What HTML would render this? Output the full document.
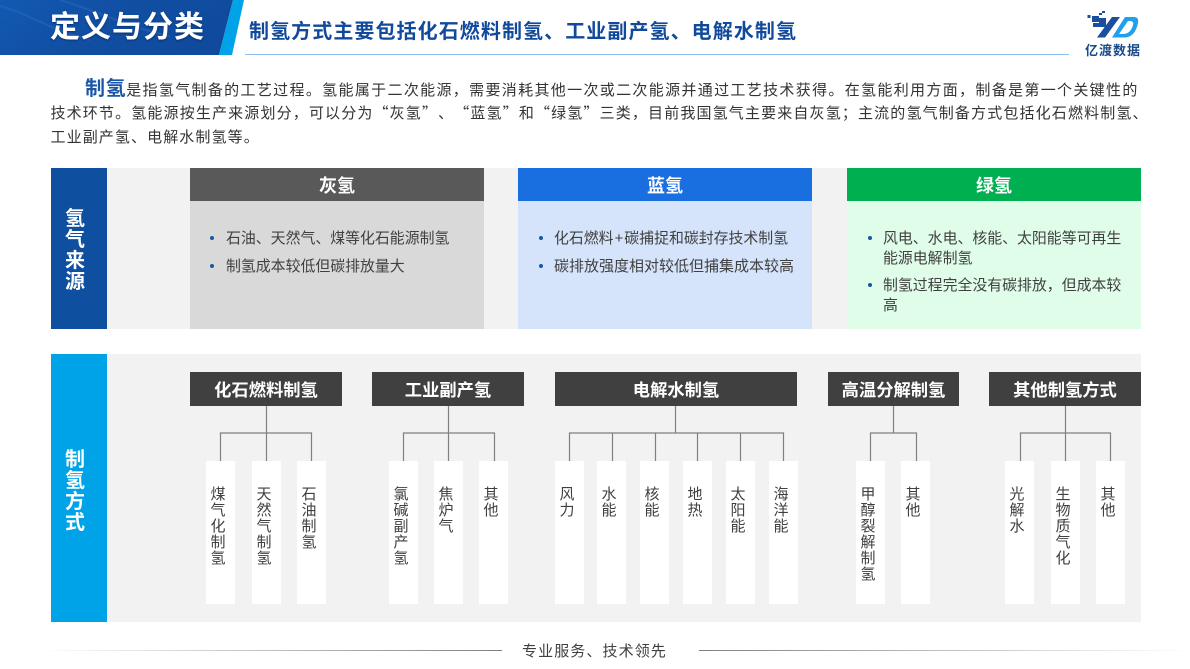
<!DOCTYPE html>
<html lang="zh">
<head>
<meta charset="utf-8">
<title>定义与分类</title>
<style>
html,body{margin:0;padding:0;background:#fff}
body{width:1190px;height:669px;position:relative;overflow:hidden;font-family:"Liberation Sans","Noto Sans CJK SC",sans-serif;color:#404040;text-spacing-trim:space-all}
.a{position:absolute}
.t{position:absolute;white-space:nowrap}
.line{position:absolute;white-space:nowrap;font-family:"Noto Sans CJK SC","Liberation Sans",sans-serif;font-size:15px;letter-spacing:1.1px;line-height:24px;color:#333;left:50.5px;text-spacing-trim:space-all}
.hd{position:absolute;color:#fff;font-weight:700;text-align:center}
.h1{top:168px;height:33px;line-height:36px;font-size:18px;width:294px}
.bd{position:absolute;top:201px;height:128px;width:294px}
.bl{position:absolute;font-size:14.9px;line-height:20px;color:#404040;white-space:nowrap}
.dot{position:absolute;width:4px;height:4px;border-radius:50%;background:#1a56a8}
.h2{top:372px;height:34px;line-height:36px;font-size:17.3px;background:#404040}
.c{position:absolute;top:461px;width:24.5px;padding-left:4.5px;padding-top:26px;box-sizing:content-box;height:117px;background:#fff;font-size:15px;line-height:16px;color:#404040}
.side{position:absolute;left:51px;width:56px;color:#fff;font-weight:700;font-size:20px;line-height:21px}
.side span{position:absolute;left:14px;width:20px;display:block}
</style>
</head>
<body>
<svg class="a" style="left:0;top:0" width="1190" height="62" viewBox="0 0 1190 62">
<defs>
<linearGradient id="g" x1="0" y1="0" x2="1" y2="0.3"><stop offset="0" stop-color="#1259b3"/><stop offset="0.5" stop-color="#114fa3"/><stop offset="1" stop-color="#0f4a9d"/></linearGradient>
</defs>
<polygon points="0,0 233,0 219,55 0,55" fill="url(#g)"/>
<path d="M60,0 C100,12 130,28 170,36 M0,6 C30,14 50,30 90,40" stroke="#2a6cc0" stroke-width="2" fill="none" opacity=".5"/>
<polygon points="233,0 244,0 232,55 219,55" fill="#00a2e8"/>
<rect x="245" y="54" width="824" height="1" fill="#8fbdf0"/>
<g fill="#1a4e9e">
<rect x="1087.5" y="15" width="3" height="3"/><rect x="1092" y="16" width="7" height="6"/><rect x="1099" y="18" width="7" height="9"/><rect x="1093" y="23" width="6" height="4"/><rect x="1099" y="13" width="3" height="2"/><rect x="1102" y="11" width="3" height="2"/>
<polygon points="1112,17 1120,17 1105,37.5 1097,37.5"/>
</g>
<path d="M1125,17 H1134 Q1139,17 1138,23 Q1135,37 1125,37.5 H1112 Z M1128,21 L1119,34 H1124 Q1131,33 1133,25 Q1134,21 1130,21 Z" fill="#1ea0ef" fill-rule="evenodd"/>
</svg>

<div class="t" style="left:50px;top:7px;font-size:30px;line-height:42px;font-weight:700;color:#fff;letter-spacing:1px;text-shadow:0 1px 2px rgba(0,0,40,.4)">定义与分类</div>
<div class="t" style="left:249px;top:18px;font-size:20px;line-height:28px;font-weight:700;color:#114a9c;letter-spacing:1.08px">制氢方式主要包括化石燃料制氢、工业副产氢、电解水制氢</div>
<div class="t" style="left:1085px;top:43px;font-size:13px;line-height:16px;font-weight:700;color:#1a4a8a;letter-spacing:1px">亿渡数据</div>

<div class="line" style="left:85px;top:75px;letter-spacing:1.33px"><b style="font-size:20px;letter-spacing:.6px;color:#1a56a8">制氢</b>是指氢气制备的工艺过程。氢能属于二次能源，需要消耗其他一次或二次能源并通过工艺技术获得。在氢能利用方面，制备是第一个关键性的</div>
<div class="line" style="top:101px;letter-spacing:1.15px">技术环节。氢能源按生产来源划分，可以分为“灰氢”、“蓝氢”和“绿氢”三类，目前我国氢气主要来自灰氢；主流的氢气制备方式包括化石燃料制氢、</div>
<div class="line" style="top:125px">工业副产氢、电解水制氢等。</div>

<!-- source -->
<div class="a" style="left:107px;top:168px;width:1034px;height:161px;background:#f2f2f2"></div>
<div class="a" style="left:51px;top:168px;width:56px;height:161px;background:#0f4fa0"></div>
<div class="side" style="top:209px"><span>氢<br>气<br>来<br>源</span></div>

<div class="hd h1" style="left:190px;background:#595959">灰氢</div>
<div class="bd" style="left:190px;background:#d9d9d9"></div>
<div class="hd h1" style="left:518px;background:#1a6fe0">蓝氢</div>
<div class="bd" style="left:518px;background:#d6e4fb"></div>
<div class="hd h1" style="left:847px;width:294px;background:#00b050">绿氢</div>
<div class="bd" style="left:847px;background:#dffde9"></div>

<i class="dot" style="left:210px;top:236px"></i><div class="bl" style="left:226px;top:229px">石油、天然气、煤等化石能源制氢</div>
<i class="dot" style="left:210px;top:264px"></i><div class="bl" style="left:226px;top:257px">制氢成本较低但碳排放量大</div>

<i class="dot" style="left:539px;top:236px"></i><div class="bl" style="left:554px;top:229px">化石燃料<span style="margin:0 1px">+</span>碳捕捉和碳封存技术制氢</div>
<i class="dot" style="left:539px;top:264px"></i><div class="bl" style="left:554px;top:257px;font-size:15px">碳排放强度相对较低但捕集成本较高</div>

<i class="dot" style="left:868px;top:236px"></i><div class="bl" style="left:883px;top:229px">风电、水电、核能、太阳能等可再生<br>能源电解制氢</div>
<i class="dot" style="left:868px;top:283px"></i><div class="bl" style="left:883px;top:276px">制氢过程完全没有碳排放，但成本较<br>高</div>

<!-- methods -->
<div class="a" style="left:107px;top:354px;width:1034px;height:268px;background:#f2f2f2"></div>
<div class="a" style="left:51px;top:354px;width:56px;height:268px;background:#00a2e8"></div>
<div class="side" style="top:450px"><span>制<br>氢<br>方<br>式</span></div>

<div class="hd h2" style="left:190px;width:152px">化石燃料制氢</div>
<div class="hd h2" style="left:372px;width:152px">工业副产氢</div>
<div class="hd h2" style="left:555px;width:242px">电解水制氢</div>
<div class="hd h2" style="left:828px;width:131px">高温分解制氢</div>
<div class="hd h2" style="left:989px;width:152px">其他制氢方式</div>

<svg class="a" style="left:0;top:400px" width="1190" height="70" viewBox="0 400 1190 70" fill="none" stroke="#808080" stroke-width="1.2">
<path d="M266.5,406V461M220.5,461V433H311.5V461"/>
<path d="M448.5,406V461M403.5,461V433H494.5V461"/>
<path d="M675.5,406V433M569.5,461V433H783.5V461M612.5,433V461M655.5,433V461M697.5,433V461M740.5,433V461"/>
<path d="M893.5,406V433M870.5,461V433H916.5V461"/>
<path d="M1065.5,406V461M1020.5,461V433H1110.5V461"/>
</svg>

<div class="c" style="left:206px">煤<br>气<br>化<br>制<br>氢</div>
<div class="c" style="left:252px">天<br>然<br>气<br>制<br>氢</div>
<div class="c" style="left:297px">石<br>油<br>制<br>氢</div>
<div class="c" style="left:389px">氯<br>碱<br>副<br>产<br>氢</div>
<div class="c" style="left:434px">焦<br>炉<br>气</div>
<div class="c" style="left:479px">其<br>他</div>
<div class="c" style="left:555px">风<br>力</div>
<div class="c" style="left:597px">水<br>能</div>
<div class="c" style="left:640px">核<br>能</div>
<div class="c" style="left:683px">地<br>热</div>
<div class="c" style="left:726px">太<br>阳<br>能</div>
<div class="c" style="left:769px">海<br>洋<br>能</div>
<div class="c" style="left:856px">甲<br>醇<br>裂<br>解<br>制<br>氢</div>
<div class="c" style="left:901px">其<br>他</div>
<div class="c" style="left:1005px">光<br>解<br>水</div>
<div class="c" style="left:1051px">生<br>物<br>质<br>气<br>化</div>
<div class="c" style="left:1096px">其<br>他</div>

<!-- footer -->
<div class="a" style="left:40px;top:650px;width:462px;height:1px;background:linear-gradient(90deg,rgba(130,130,130,0),#808080)"></div>
<div class="a" style="left:699px;top:650px;width:491px;height:1px;background:linear-gradient(90deg,#808080,rgba(130,130,130,0))"></div>
<div class="t" style="left:522px;top:641px;font-size:15px;line-height:22px;letter-spacing:1.1px;color:#404040">专业服务、技术领先</div>
</body>
</html>
